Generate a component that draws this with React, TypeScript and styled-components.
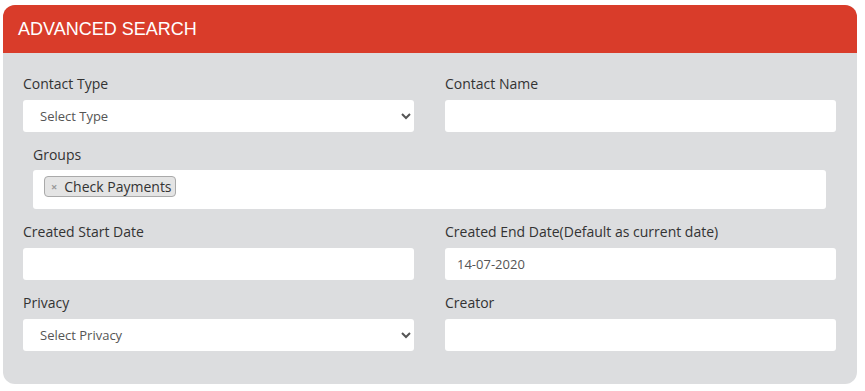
import React from "react";
import styled, { createGlobalStyle } from "styled-components";

const GlobalStyle = createGlobalStyle`
  html, body {
    margin: 0;
    padding: 0;
    background: #ffffff;
  }
  * {
    box-sizing: border-box;
  }
`;

const Panel = styled.section`
  width: 854px;
  margin: 5px 0 0 3px;
  background: #dcdddf;
  border-radius: 12px;
  overflow: hidden;
  font-family: "Open Sans", sans-serif;
`;

const PanelHeader = styled.header`
  height: 48px;
  background: #d93c2a;
  display: flex;
  align-items: center;
  padding: 0 15px;
`;

const PanelTitle = styled.h2`
  margin: 0;
  color: #ffffff;
  font-family: "Liberation Sans", Arial, sans-serif;
  font-size: 18px;
  font-weight: 400;
`;

const PanelBody = styled.div`
  padding: 21px 21px 33px 20px;
  display: grid;
  grid-template-columns: 391px 391px;
  column-gap: 31px;
  row-gap: 13px;
`;

const Field = styled.div<{ $wide?: boolean }>`
  display: flex;
  flex-direction: column;
  gap: 6px;
  ${(p) => (p.$wide ? "grid-column: 1 / -1; margin: 0 10px; gap: 5px;" : "")}
`;

const Label = styled.label`
  font-size: 14px;
  line-height: 20px;
  color: #333333;
`;

const TextInput = styled.input`
  height: 32px;
  border: none;
  border-radius: 3px;
  background: #ffffff;
  padding: 0 12px;
  font-family: "Open Sans", sans-serif;
  font-size: 13px;
  color: #555555;
  outline: none;
`;

const Select = styled.select`
  height: 32px;
  border: none;
  border-radius: 3px;
  background: #ffffff;
  padding: 0 8px 0 13px;
  font-family: "Open Sans", sans-serif;
  font-size: 13px;
  color: #555555;
  outline: none;
`;

const TagBox = styled.div`
  height: 39px;
  background: #ffffff;
  border-radius: 3px;
  display: flex;
  align-items: flex-start;
  padding: 6px 11px 0;
`;

const Tag = styled.span`
  display: inline-flex;
  align-items: center;
  height: 21px;
  padding: 0 3px 0 6px;
  gap: 7px;
  background: #e4e4e4;
  border: 1px solid #aaaaaa;
  border-radius: 4px;
  font-size: 14px;
  color: #333333;
`;

const TagRemove = styled.span`
  color: #999999;
  font-size: 11px;
  font-weight: 700;
  line-height: 1;
`;

export default function App() {
  return (
    <>
      <GlobalStyle />
      <Panel>
        <PanelHeader>
          <PanelTitle>ADVANCED SEARCH</PanelTitle>
        </PanelHeader>
        <PanelBody>
          <Field>
            <Label>Contact Type</Label>
            <Select defaultValue="">
              <option value="">Select Type</option>
            </Select>
          </Field>
          <Field>
            <Label>Contact Name</Label>
            <TextInput type="text" />
          </Field>

          <Field $wide>
            <Label>Groups</Label>
            <TagBox>
              <Tag>
                <TagRemove>×</TagRemove>
                Check Payments
              </Tag>
            </TagBox>
          </Field>

          <Field>
            <Label>Created Start Date</Label>
            <TextInput type="text" />
          </Field>
          <Field>
            <Label>Created End Date(Default as current date)</Label>
            <TextInput type="text" defaultValue="14-07-2020" />
          </Field>

          <Field>
            <Label>Privacy</Label>
            <Select defaultValue="">
              <option value="">Select Privacy</option>
            </Select>
          </Field>
          <Field>
            <Label>Creator</Label>
            <TextInput type="text" />
          </Field>
        </PanelBody>
      </Panel>
    </>
  );
}
